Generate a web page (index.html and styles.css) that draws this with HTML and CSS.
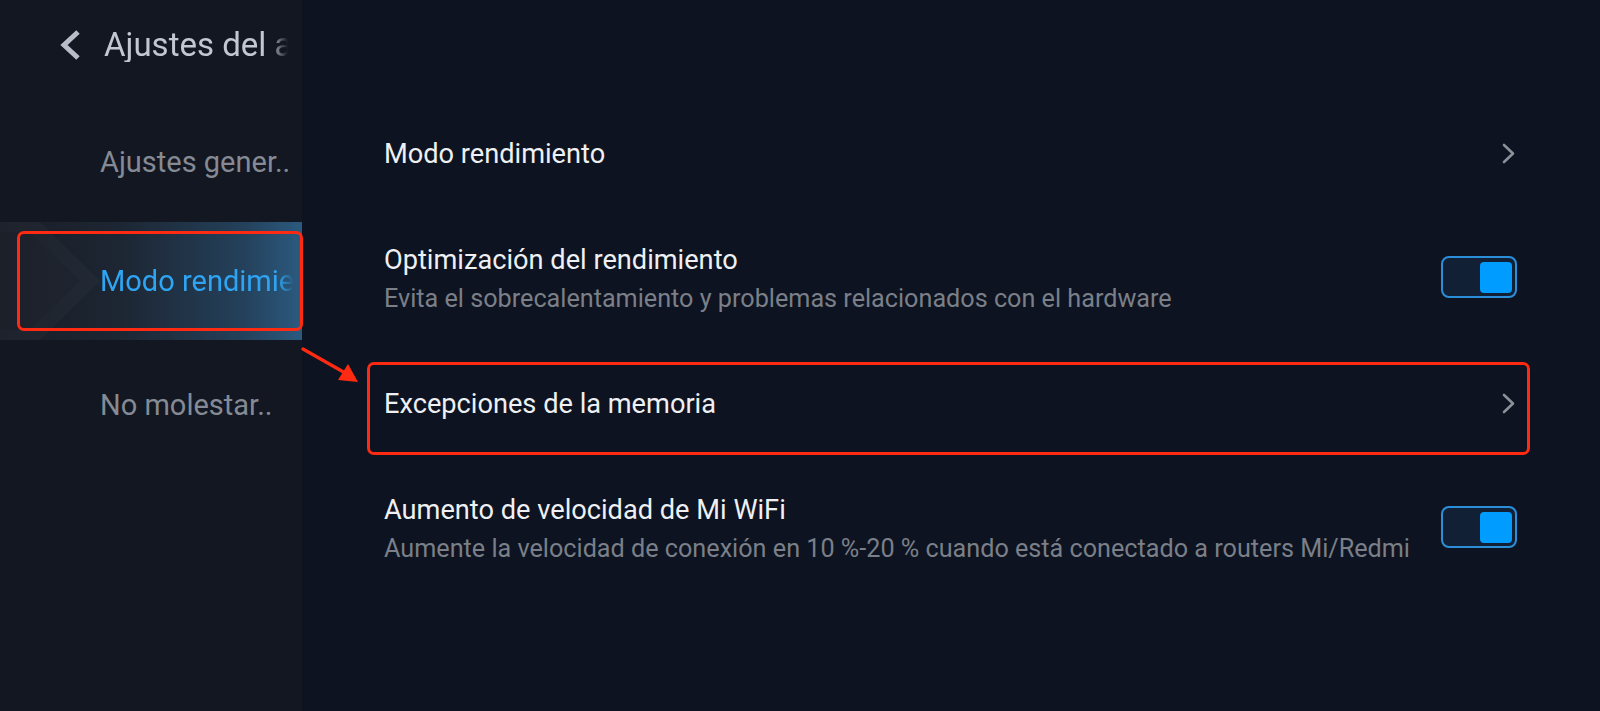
FILE: index.html
```html
<!DOCTYPE html>
<html lang="es">
<head>
<meta charset="utf-8">
<title>Modo rendimiento</title>
<link rel="stylesheet" href="styles.css">
</head>
<body>
<div class="app">
  <aside class="sidebar">
    <header class="topbar">
      <svg class="back" width="26" height="32" viewBox="0 0 26 32">
        <path d="M20 3 L6 16 L20 29" fill="none" stroke="#b9bdc9" stroke-width="5" stroke-linejoin="miter"/>
      </svg>
      <span class="topbar-title">Ajustes del aplicación</span>
    </header>
    <nav class="nav">
      <div class="nav-item">Ajustes gener..</div>
      <div class="nav-item active">
        <svg class="active-deco" width="120" height="118" viewBox="0 0 120 118">
          <polygon points="0,0 40,0 100,59 40,118 0,118" fill="#ffffff" fill-opacity="0.025"/>
          <polygon points="0,10 30,10 80,59 30,108 0,108" fill="#000000" fill-opacity="0.06"/>
        </svg>
        <span class="nav-label">Modo rendimiento</span>
      </div>
      <div class="nav-item last">No molestar..</div>
    </nav>
  </aside>
  <main class="content">
    <div class="row">
      <div class="text"><div class="title">Modo rendimiento</div></div>
      <svg class="chev" width="14" height="21" viewBox="0 0 14 21"><path d="M2 2 L11 10.5 L2 19" fill="none" stroke="#8b9099" stroke-width="2.6" stroke-linecap="round" stroke-linejoin="round"/></svg>
    </div>
    <div class="row">
      <div class="text">
        <div class="title">Optimización del rendimiento</div>
        <div class="sub">Evita el sobrecalentamiento y problemas relacionados con el hardware</div>
      </div>
      <div class="toggle"><div class="knob"></div></div>
    </div>
    <div class="row">
      <div class="text"><div class="title">Excepciones de la memoria</div></div>
      <svg class="chev" width="14" height="21" viewBox="0 0 14 21"><path d="M2 2 L11 10.5 L2 19" fill="none" stroke="#8b9099" stroke-width="2.6" stroke-linecap="round" stroke-linejoin="round"/></svg>
    </div>
    <div class="row">
      <div class="text">
        <div class="title">Aumento de velocidad de Mi WiFi</div>
        <div class="sub">Aumente la velocidad de conexión en 10 %-20 % cuando está conectado a routers Mi/Redmi</div>
      </div>
      <div class="toggle"><div class="knob"></div></div>
    </div>
  </main>
  <div class="mark mark-nav"></div>
  <div class="mark mark-row"></div>
  <svg class="arrow" width="70" height="50" viewBox="0 0 70 50">
    <line x1="2" y1="2" x2="46" y2="27" stroke="#ff2a12" stroke-width="3.2" stroke-linecap="round"/>
    <polygon points="57,35 37,33 47,17" fill="#ff2a12"/>
  </svg>
</div>
</body>
</html>
```

FILE: styles.css
```css
* { box-sizing: border-box; }
html, body {
  margin: 0;
  padding: 0;
  background: #0d1320;
  font-family: Roboto, "Noto Sans", "Liberation Sans", sans-serif;
}
.app {
  position: relative;
  display: flex;
  width: 1600px;
  height: 711px;
  overflow: hidden;
}
.sidebar {
  width: 302px;
  flex: none;
  background: #121722;
  display: flex;
  flex-direction: column;
}
.topbar {
  height: 102px;
  display: flex;
  align-items: flex-start;
  padding: 28px 0 0 58px;
  gap: 20px;
  overflow: hidden;
}
.back { flex: none; margin-top: 1px; }
.topbar-title {
  font-size: 33px;
  color: #c3c7d3;
  white-space: nowrap;
  line-height: 34px;
  -webkit-mask-image: linear-gradient(to right, #000 166px, transparent 184px);
  mask-image: linear-gradient(to right, #000 166px, transparent 184px);
  width: 184px;
  overflow: hidden;
}
.nav { display: flex; flex-direction: column; }
.nav-item {
  height: 120px;
  display: flex;
  align-items: center;
  padding-left: 100px;
  font-size: 29px;
  color: #858a94;
  white-space: nowrap;
  overflow: hidden;
}
.nav-item.last { padding-top: 6px; }
.nav-item.active {
  position: relative;
  height: 118px;
  margin-bottom: 2px;
  background: linear-gradient(to right, #191d27 0%, #1d2633 40%, #24405a 80%, #2b5a7f 100%);
  color: #2ea4f3;
}
.active-deco { position: absolute; left: 0; top: 0; }
.nav-label {
  position: relative;
  width: 194px;
  overflow: hidden;
  -webkit-mask-image: linear-gradient(to right, #000 178px, transparent 194px);
  mask-image: linear-gradient(to right, #000 178px, transparent 194px);
}
.content {
  flex: 1;
  padding: 91px 83px 0 82px;
  display: flex;
  flex-direction: column;
}
.row {
  height: 125px;
  display: flex;
  align-items: center;
  justify-content: space-between;
}
.title {
  font-size: 27.2px;
  color: #eef0f3;
  line-height: 34px;
}
.sub {
  font-size: 25.2px;
  color: #7a7f88;
  line-height: 30px;
  margin-top: 7px;
}
.chev { flex: none; margin-right: 1px; }
.toggle {
  flex: none;
  width: 76px;
  height: 42px;
  margin-top: -3px;
  border: 2.5px solid #2a8fd8;
  border-radius: 8px;
  background: #122035;
  display: flex;
  justify-content: flex-end;
  align-items: center;
  padding: 3px;
}
.knob {
  width: 32px;
  height: 31px;
  border-radius: 4px;
  background: #019cff;
}
.mark {
  position: absolute;
  border: 3.5px solid #ff2a12;
  border-radius: 7px;
}
.mark-nav { left: 17px; top: 231px; width: 286px; height: 100px; }
.mark-row { left: 367px; top: 362px; width: 1163px; height: 93px; }
.arrow { position: absolute; left: 301px; top: 347px; }
```
